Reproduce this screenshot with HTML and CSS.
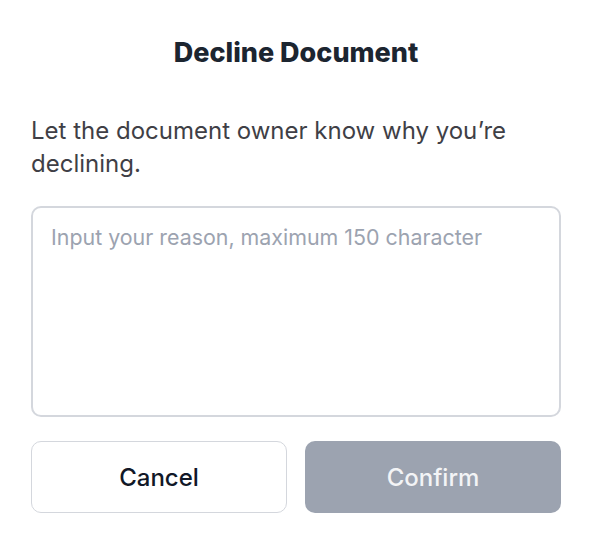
FILE: index.html
```html
<!DOCTYPE html>
<html>
<head>
<meta charset="utf-8">
<link rel="stylesheet" href="styles.css">
</head>
<body>
<div class="dialog">
  <h1 class="title">Decline Document</h1>
  <p class="desc">Let the document owner know why you’re declining.</p>
  <textarea class="reason" placeholder="Input your reason, maximum 150 character"></textarea>
  <div class="actions">
    <button class="btn btn-cancel">Cancel</button>
    <button class="btn btn-confirm" disabled>Confirm</button>
  </div>
</div>
</body>
</html>
```
FILE: styles.css
```css
html, body {
  margin: 0;
  padding: 0;
  background: #ffffff;
}
.dialog {
  width: 530px;
  margin-left: 31px;
  padding-top: 34px;
  font-family: Inter, "Noto Sans", sans-serif;
  display: flex;
  flex-direction: column;
}
.title {
  margin: 0;
  text-align: center;
  font-size: 27px;
  font-weight: 800;
  letter-spacing: 0;
  color: #1c2530;
  line-height: 38px;
}
.desc {
  margin: 42px 0 0;
  font-size: 24px;
  line-height: 33px;
  color: #3f3f46;
  font-weight: 400;
}
.reason {
  margin-top: 26px;
  box-sizing: border-box;
  width: 530px;
  height: 211px;
  border: 2px solid #d4d7dd;
  border-radius: 10px;
  padding: 16px 18px;
  font-family: Inter, "Noto Sans", sans-serif;
  font-size: 21.4px;
  resize: none;
  outline: none;
}
.reason::placeholder {
  color: #9ca3b0;
}
.actions {
  margin-top: 24px;
  display: grid;
  grid-template-columns: 1fr 1fr;
  gap: 18px;
}
.btn {
  height: 72px;
  border-radius: 10px;
  font-family: Inter, "Noto Sans", sans-serif;
  font-size: 24px;
  font-weight: 500;
  box-sizing: border-box;
}
.btn-cancel {
  background: #ffffff;
  border: 1.5px solid #d4d7dd;
  color: #111827;
}
.btn-confirm {
  background: #9ca3b0;
  border: none;
  color: #f3f4f6;
}
```
